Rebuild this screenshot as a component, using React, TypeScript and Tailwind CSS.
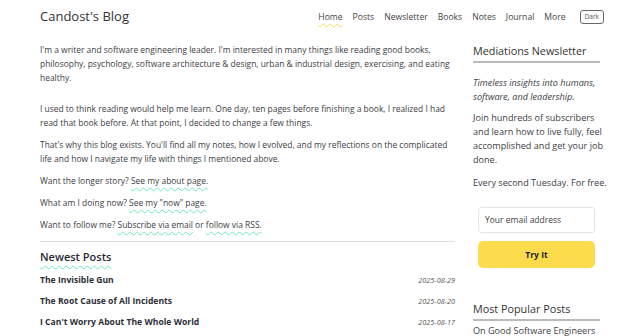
import React from "react"

const font = { fontFamily: '"Open Sans", "Noto Sans", sans-serif' }

const navItems = ["Home", "Posts", "Newsletter", "Books", "Notes", "Journal", "More"]

const posts = [
  { title: "The Invisible Gun", date: "2025-08-29" },
  { title: "The Root Cause of All Incidents", date: "2025-08-20" },
  { title: "I Can't Worry About The Whole World", date: "2025-08-17" },
]

function Link({ children }: { children: React.ReactNode }) {
  return (
    <a className="underline decoration-wavy decoration-[#6ee7b7] decoration-1 underline-offset-[3px]">
      {children}
    </a>
  )
}

export default function App() {
  return (
    <div className="w-[640px] h-[336px] overflow-hidden bg-white text-[#3d3d44]" style={font}>
      {/* Header */}
      <header className="flex items-center justify-between pl-10 pr-[36px] h-[34px]">
        <span className="text-[13px] text-[#333]">Candost's Blog</span>
        <nav className="flex items-center gap-[10px] text-[8.6px] text-[#444]">
          {navItems.map((item) => (
            <span
              key={item}
              className={item === "Home" ? "underline decoration-wavy decoration-[#f5d94a] decoration-1 underline-offset-[3px]" : ""}
            >
              {item}
            </span>
          ))}
          <span className="ml-[4px] border border-[#666] rounded-[3px] px-[4px] py-[1px] text-[6.5px] text-[#555]">Dark</span>
        </nav>
      </header>

      <div className="flex pl-10 pt-[9px] gap-[18px]">
        {/* Main column */}
        <main className="w-[415px] text-[8.45px] leading-[14px]">
          <p>
            I'm a writer and software engineering leader. I'm interested in many things like reading good books,
            philosophy, psychology, software architecture &amp; design, urban &amp; industrial design, exercising, and eating
            healthy.
          </p>
          <p className="mt-[17px]">
            I used to think reading would help me learn. One day, ten pages before finishing a book, I realized I had
            read that book before. At that point, I decided to change a few things.
          </p>
          <p className="mt-[8px]">
            That's why this blog exists. You'll find all my notes, how I evolved, and my reflections on the complicated
            life and how I navigate my life with things I mentioned above.
          </p>
          <p className="mt-[8px]">
            Want the longer story? <Link>See my about page.</Link>
          </p>
          <p className="mt-[8px]">
            What am I doing now? <Link>See my "now" page.</Link>
          </p>
          <p className="mt-[8px]">
            Want to follow me? <Link>Subscribe via email</Link> or <Link>follow via RSS.</Link>
          </p>
          <div className="mt-[9px] border-t border-[#ddd]" />
          <h2 className="mt-[8px] text-[11px] font-semibold text-[#2a2a33] inline-block underline decoration-wavy decoration-[#6ee7b7] decoration-1 underline-offset-[4px]">
            Newest Posts
          </h2>
          <ul className="mt-[8px] flex flex-col gap-[7px]">
            {posts.map((p) => (
              <li key={p.title} className="flex items-center justify-between">
                <span className="font-bold text-[8.6px] text-[#2e2e38]">{p.title}</span>
                <span className="italic text-[7.3px] text-[#555]">{p.date}</span>
              </li>
            ))}
          </ul>
        </main>

        {/* Sidebar */}
        <aside className="w-[127px] text-[9.1px] leading-[13.7px] whitespace-nowrap">
          <h3 className="text-[10.8px] leading-[16px] text-[#333] pb-[2px] border-b-2 border-[#bbb]">Mediations Newsletter</h3>
          <p className="mt-[13px] italic">
            Timeless insights into humans,
            <br />
            software, and leadership.
          </p>
          <p className="mt-[8px]">
            Join hundreds of subscribers
            <br />
            and learn how to live fully, feel
            <br />
            accomplished and get your job
            <br />
            done.
          </p>
          <p className="mt-[10px]">Every second Tuesday. For free.</p>
          <div className="mt-[17px] ml-[5px] mr-[5px] flex flex-col gap-[8px]">
            <div className="h-[26px] border border-[#e5e5e5] rounded-[3px] flex items-center px-[6px] text-[8.5px] text-[#444]">
              Your email address
            </div>
            <button className="h-[27px] rounded-[5px] bg-[#fcdc4d] text-[8.5px] font-bold text-[#222]">Try It</button>
          </div>
          <h3 className="mt-[33px] text-[10.8px] leading-[16px] text-[#333] pb-[2px] border-b-2 border-[#bbb]">Most Popular Posts</h3>
          <p className="mt-[3px]">On Good Software Engineers</p>
        </aside>
      </div>
    </div>
  )
}
